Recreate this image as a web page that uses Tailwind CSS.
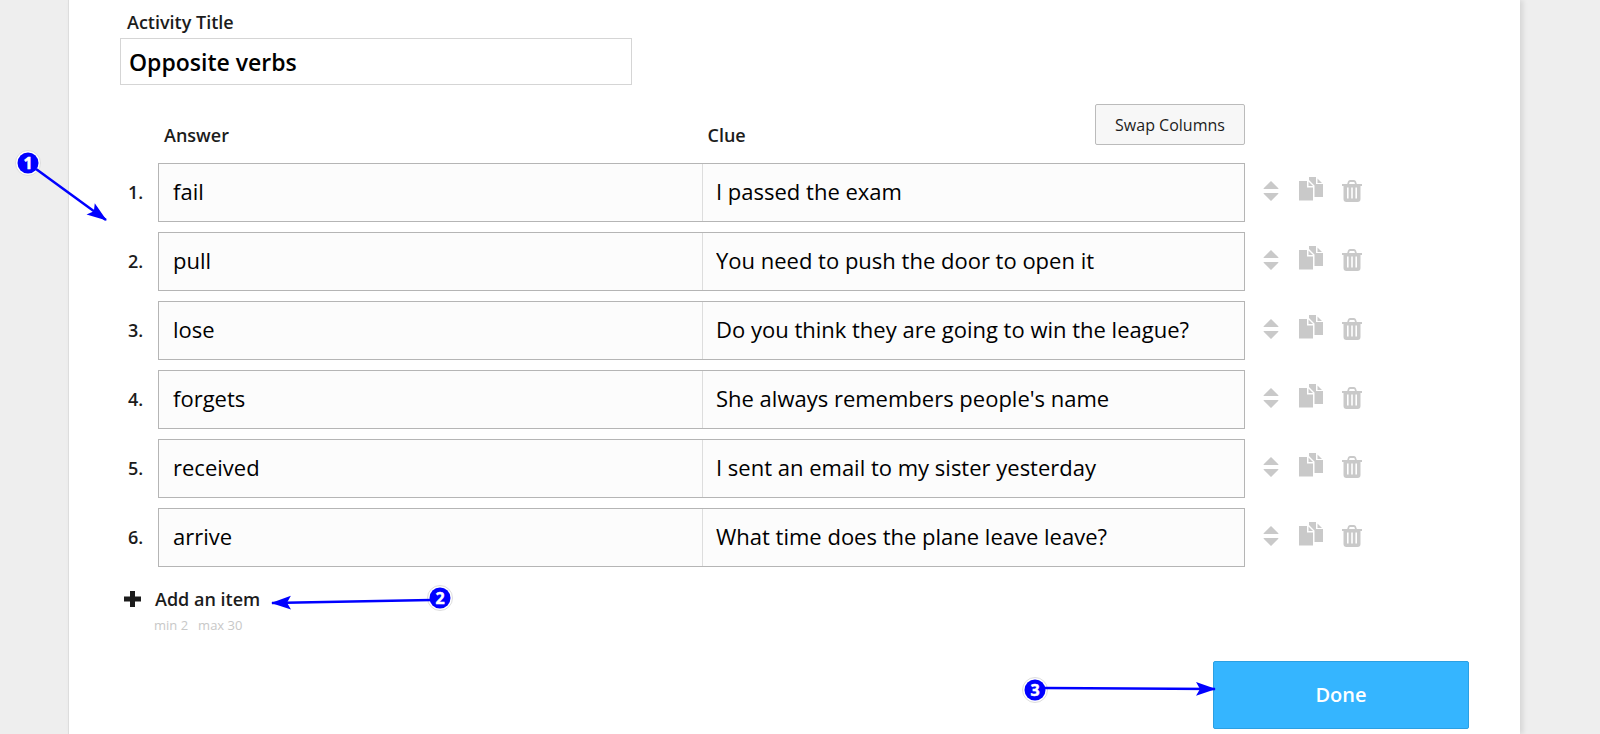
<!DOCTYPE html>
<html lang="en">
<head>
  <meta charset="UTF-8">
  <meta name="viewport" content="width=device-width, initial-scale=1.0">
  <title>Opposite verbs</title>
  <script src="https://cdn.jsdelivr.net/npm/@tailwindcss/browser@4"></script>
</head>
<body class="bg-[#eeeeee] font-['Open_Sans','Noto_Sans',sans-serif] text-[#1c1c1c] relative overflow-x-hidden">
  <!-- icon shapes used by every row -->
  <svg class="hidden">
    <symbol id="icon-move" viewBox="0 0 16 20">
      <path d="M8 0 15.3 7.3Q15.7 8 15 8H1Q.3 8 .7 7.3ZM8 20 15.3 12.7Q15.7 12 15 12H1Q.3 12 .7 12.7Z"/>
    </symbol>
    <symbol id="icon-copy" viewBox="0 0 24 24">
      <path d="M0 4h8v6.500h6v13H0ZM9.500 4.500 14 9H9.500ZM10 0h7v7h7v13h-8.500V8.500L10 3ZM18.500 1.500 23 6h-4.500Z"/>
    </symbol>
    <symbol id="icon-trash" viewBox="0 0 20 22">
      <path fill-rule="evenodd" d="M0 4h5.200L6 1.500Q6.500 0 8 0h4q1.500 0 2 1.500L14.800 4H20v2h-1.500v13q0 3-3 3h-11q-3 0-3-3V6H0ZM7 4h6l-.7-2H7.700ZM5 7.500v11h1.600v-11ZM9.200 7.500v11h1.600v-11ZM13.400 7.500v11H15v-11Z"/>
    </symbol>
  </svg>

  <main class="ml-[68px] mr-20 min-h-screen bg-white border-l border-[#dddddd] shadow-[3px_0_5px_rgba(0,0,0,0.1)] px-[51px] pt-2.5 pb-[5px]">
    <label for="title" class="block pl-[7px] text-lg leading-6 font-semibold">Activity Title</label>
    <input type="text" id="title" value="Opposite verbs" class="block mt-1 w-[512px] h-[47px] px-2 border border-[#d5d5d5] bg-white text-[23px] font-semibold text-black">

    <div class="flex mt-[19px] h-[59px] pl-[38px] pr-[224px]">
      <div id="answer-head" class="flex-1 pl-1.5 pt-[19px] text-lg leading-6 font-semibold">Answer</div>
      <div class="flex-1 flex justify-between items-start pl-1.5">
        <div id="clue-head" class="pt-[19px] text-lg leading-6 font-semibold">Clue</div>
        <button type="button" class="w-[150px] h-[41px] border border-[#bbbbbb] rounded-xs bg-[#f7f7f7] text-base">Swap Columns</button>
      </div>
    </div>

    <ol id="items" class="flex flex-col gap-2.5"></ol>

    <button type="button" class="flex items-center gap-3.5 mt-5 pl-1 text-lg leading-6 font-semibold">
      <svg class="w-[17px] h-4 fill-[#1c1c1c]" viewBox="0 0 17 16"><path d="M6 0h5v5.500h6v5h-6V16H6v-5.500H0v-5h6Z"/></svg>
      Add an item
    </button>
    <p class="flex gap-2.5 mt-1 pl-[34px] text-[13px] leading-5 text-[#c8c8c8]"><span>min 2</span><span>max 30</span></p>

    <div class="flex justify-end mt-[26px]">
      <button type="button" class="w-64 h-[68px] border border-[#2ba0e3] rounded-xs bg-[#35b5ff] text-xl font-semibold text-white">Done</button>
    </div>
  </main>

  <!-- numbered pointers over the form -->
  <svg class="absolute left-0 top-0 w-[1600px] h-[734px] pointer-events-none" viewBox="0 0 1600 734">
    <defs>
      <marker id="head" markerUnits="userSpaceOnUse" markerWidth="20" markerHeight="16" refX="19" refY="8" orient="auto">
        <path d="M0 1 20 8 0 15 4 8Z" fill="#0000ff"/>
      </marker>
    </defs>
    <g fill="#0000ff" stroke="#dddddd" stroke-width="1">
      <circle cx="28" cy="163" r="12.500" fill="#ffffff"/><circle cx="28" cy="163" r="10.500" stroke="none"/>
      <circle cx="440" cy="598" r="12.500" fill="#ffffff"/><circle cx="440" cy="598" r="10.500" stroke="none"/>
      <circle cx="1035" cy="690" r="12.500" fill="#ffffff"/><circle cx="1035" cy="690" r="10.500" stroke="none"/>
    </g>
    <g stroke="#0000ff" stroke-width="2.500">
      <path d="M36 169 106 220" marker-end="url(#head)"/>
      <path d="M431 600 272 603" marker-end="url(#head)"/>
      <path d="M1045 688 1215 689" marker-end="url(#head)"/>
    </g>
    <g class="font-['Open_Sans',sans-serif] text-base font-bold" fill="#ffffff" stroke="#ffffff" stroke-width=".500" text-anchor="middle">
      <text x="28" y="169">1</text>
      <text x="440" y="604">2</text>
      <text x="1035" y="696">3</text>
    </g>
  </svg>

  <script>
    const items = [
      ['fail', 'I passed the exam'],
      ['pull', 'You need to push the door to open it'],
      ['lose', 'Do you think they are going to win the league?'],
      ['forgets', "She always remembers people's name"],
      ['received', 'I sent an email to my sister yesterday'],
      ['arrive', 'What time does the plane leave leave?'],
    ];

    document.getElementById('items').innerHTML = items.map(([answer, clue], i) => `
      <li class="flex items-center h-[59px]">
        <span class="w-[38px] pl-2 pb-0.5 text-lg leading-6 font-semibold">${i + 1}.</span>
        <div class="flex flex-1 h-full border border-[#b5b5b5] bg-[#fcfcfc]">
          <input type="text" aria-labelledby="answer-head" value="${answer}" class="flex-1 min-w-0 px-3.5 pb-0.5 text-[22px] text-black border-r border-[#dddddd]">
          <input type="text" aria-labelledby="clue-head" value="${clue}" class="flex-1 min-w-0 px-[13px] pb-0.5 text-[22px] text-black">
        </div>
        <div class="flex items-center w-[224px] pl-[18px] pb-2 fill-[#c9c9c9]">
          <button type="button" aria-label="Move" class="mr-5 pt-1"><svg class="w-4 h-5"><use href="#icon-move"/></svg></button>
          <button type="button" aria-label="Duplicate" class="mr-[19px]"><svg class="w-6 h-6"><use href="#icon-copy"/></svg></button>
          <button type="button" aria-label="Delete" class="pt-1"><svg class="w-5 h-[22px]"><use href="#icon-trash"/></svg></button>
        </div>
      </li>`).join('');
  </script>
</body>
</html>
